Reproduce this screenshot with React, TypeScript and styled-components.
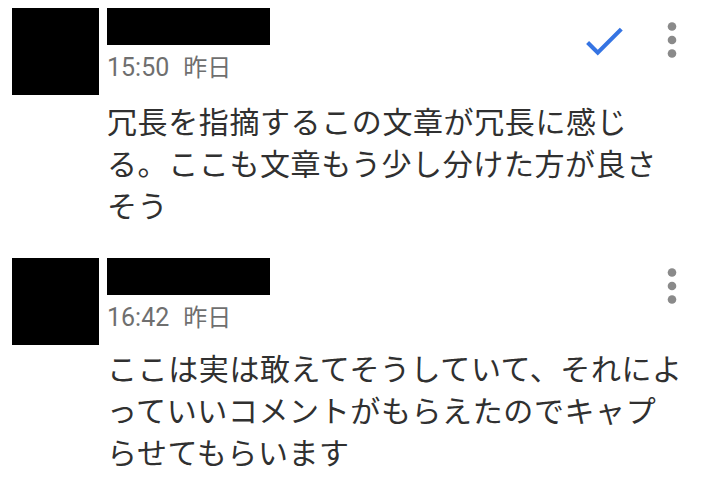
import React from "react";
import styled, { createGlobalStyle } from "styled-components";

const Global = createGlobalStyle`
  html, body { margin: 0; padding: 0; background: #ffffff; }
  body { width: 708px; height: 494px; overflow: hidden; font-family: Roboto, "Noto Sans CJK JP", sans-serif; }
`;

const List = styled.div`
  display: flex;
  flex-direction: column;
  gap: 33px;
  padding-top: 8px;
`;

const Row = styled.div`
  display: flex;
  gap: 8px;
  padding-left: 12px;
`;

const Avatar = styled.div`
  width: 87px;
  height: 87px;
  flex-shrink: 0;
  background: #000;
`;

const Content = styled.div`
  flex: 1;
  display: flex;
  flex-direction: column;
  min-width: 0;
`;

const Header = styled.div`
  display: flex;
  align-items: flex-start;
  height: 37px;
`;

const NameBar = styled.div`
  width: 163px;
  height: 37px;
  background: #000;
`;

const Actions = styled.div<{ $offset: number }>`
  margin-left: auto;
  margin-top: ${(p) => p.$offset}px;
  height: 50px;
  display: flex;
  align-items: center;
  gap: 35px;
  padding-right: 28px;
`;

const CheckIcon = styled.svg`
  width: 50px;
  height: 50px;
  display: block;
`;

const MoreIcon = styled.svg`
  width: 16px;
  height: 40px;
  display: block;
`;

const Meta = styled.div`
  display: flex;
  align-items: baseline;
  gap: 14px;
  margin-top: 7px;
  line-height: 28px;
  font-size: 25px;
  color: #6f6f6f;
`;

const Clock = styled.span`
  font-family: Roboto, sans-serif;
`;

const Day = styled.span`
  font-family: "Noto Sans CJK JP", sans-serif;
  font-size: 24px;
`;

const Body = styled.div<{ $gap: number }>`
  margin-top: ${(p) => p.$gap}px;
  font-family: "Noto Sans CJK JP", sans-serif;
  font-size: 30px;
  letter-spacing: 0.6px;
  line-height: 42px;
  color: #303030;
  white-space: nowrap;
`;

const Check = () => (
  <CheckIcon viewBox="0 0 24 24">
    <path fill="#3574e3" d="M9 16.17L4.83 12l-1.42 1.41L9 19 21 7l-1.41-1.41z" />
  </CheckIcon>
);

const More = () => (
  <MoreIcon viewBox="0 0 16 40">
    <circle cx="8" cy="5.5" r="4.3" fill="#8a8a8a" />
    <circle cx="8" cy="19" r="4.3" fill="#8a8a8a" />
    <circle cx="8" cy="32.5" r="4.3" fill="#8a8a8a" />
  </MoreIcon>
);

type CommentProps = {
  time: string;
  lines: string[];
  resolved?: boolean;
  actionOffset: number;
  bodyGap: number;
};

const Comment = ({ time, lines, resolved, actionOffset, bodyGap }: CommentProps) => (
  <Row>
    <Avatar />
    <Content>
      <Header>
        <NameBar />
        <Actions $offset={actionOffset}>
          {resolved && <Check />}
          <More />
        </Actions>
      </Header>
      <Meta>
        <Clock>{time}</Clock>
        <Day>昨日</Day>
      </Meta>
      <Body $gap={bodyGap}>
        {lines.map((l, i) => (
          <React.Fragment key={i}>
            {l}
            {i < lines.length - 1 && <br />}
          </React.Fragment>
        ))}
      </Body>
    </Content>
  </Row>
);

export default function App() {
  return (
    <>
      <Global />
      <List>
        <Comment
          time="15:50"
          resolved
          actionOffset={8}
          bodyGap={17}
          lines={[
            "冗長を指摘するこの文章が冗長に感じ",
            "る。ここも文章もう少し分けた方が良さ",
            "そう",
          ]}
        />
        <Comment
          time="16:42"
          actionOffset={4}
          bodyGap={14}
          lines={[
            "ここは実は敢えてそうしていて、それによ",
            "っていいコメントがもらえたのでキャプ",
            "らせてもらいます",
          ]}
        />
      </List>
    </>
  );
}
